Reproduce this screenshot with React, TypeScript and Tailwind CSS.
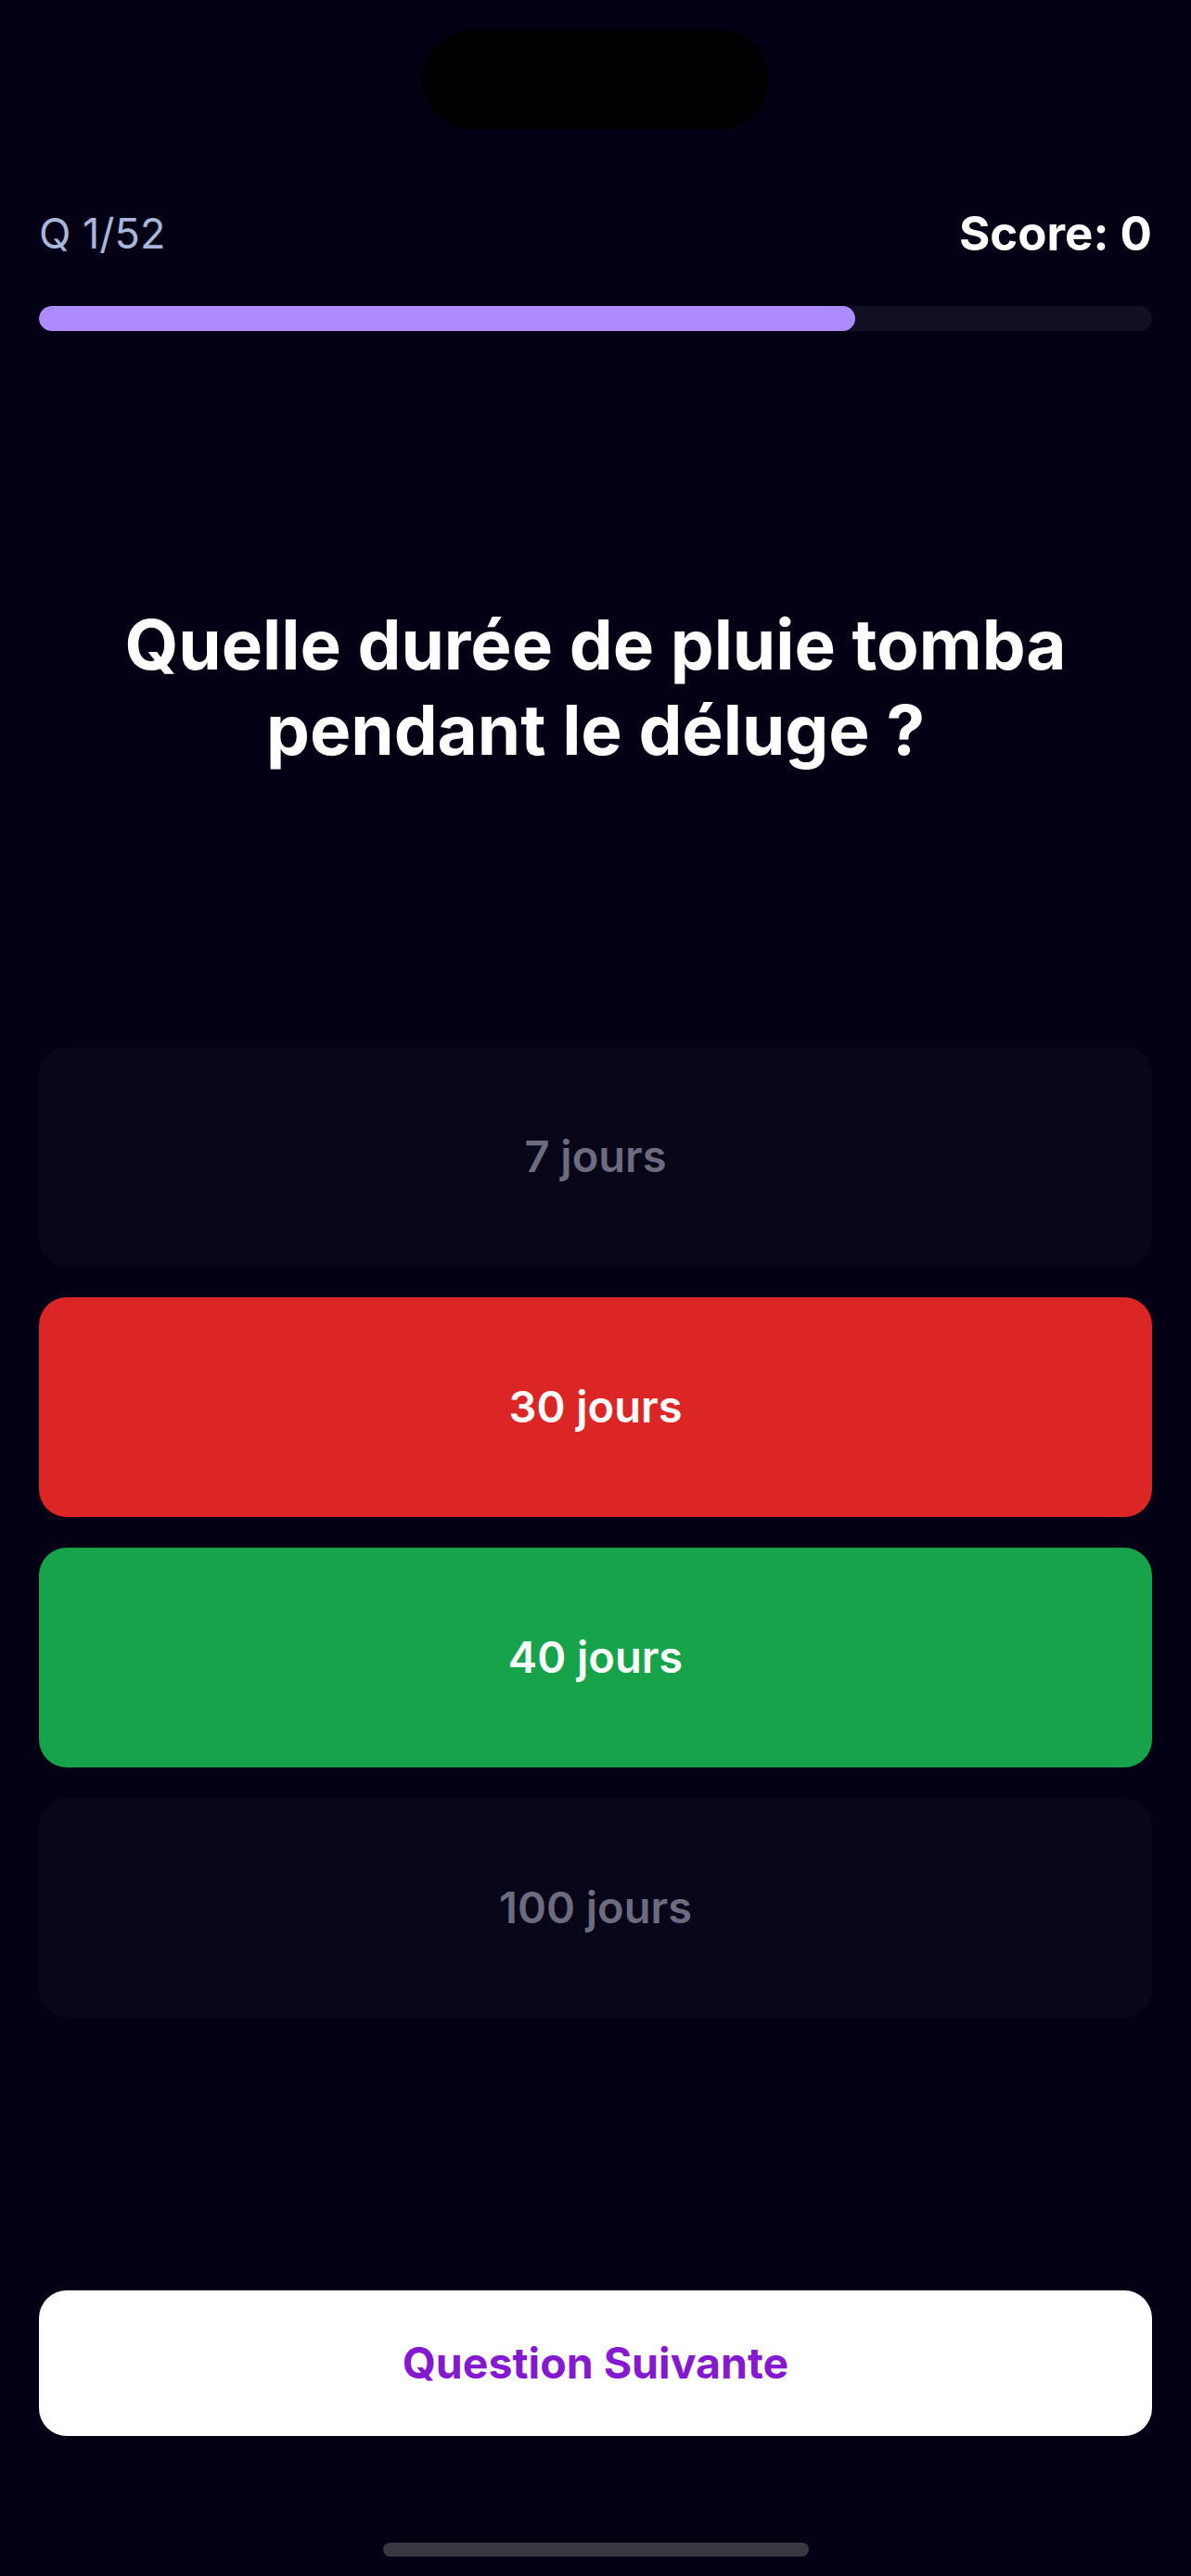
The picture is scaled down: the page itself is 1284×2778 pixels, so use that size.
import React from "react";

const options = [
  { label: "7 jours", state: "dim" },
  { label: "30 jours", state: "wrong" },
  { label: "40 jours", state: "right" },
  { label: "100 jours", state: "dim" },
];

export default function App() {
  return (
    <div
      className="w-[1284px] h-[2778px] bg-[#030016] flex flex-col px-[42px] overflow-hidden"
      style={{ fontFamily: "Inter, 'Noto Sans', sans-serif" }}
    >
      <div className="pt-[32px] flex justify-center">
        <div className="w-[374px] h-[108px] rounded-full bg-black" />
      </div>

      <div className="mt-[85px] flex items-start justify-between h-[54px]">
        <span className="text-[45px] leading-[54px] text-[#aab5da] font-normal">Q 1/52</span>
        <span className="text-[51px] leading-[54px] text-white font-bold">Score: 0</span>
      </div>

      <div className="mt-[51px] h-[27px] w-full rounded-full bg-[#100f24] overflow-hidden">
        <div className="h-full rounded-full bg-[#ad8bfc]" style={{ width: "73.3%" }} />
      </div>

      <h1 className="mt-[292px] text-center text-white font-bold text-[74.5px] leading-[92px]">
        Quelle durée de pluie tomba
        <br />
        pendant le déluge ?
      </h1>

      <div className="mt-[296px] flex flex-col gap-[33px]">
        {options.map((o) => (
          <div
            key={o.label}
            className={
              o.state === "wrong"
                ? "h-[237px] rounded-[30px] bg-[#dc2626] flex items-center justify-center text-white text-[47px] font-semibold"
                : o.state === "right"
                ? "h-[237px] rounded-[30px] bg-[#16a34a] flex items-center justify-center text-white text-[47px] font-semibold"
                : "h-[237px] rounded-[30px] bg-[#080619] flex items-center justify-center text-[#6d6b7f] text-[47px] font-semibold"
            }
          >
            {o.label}
          </div>
        ))}
      </div>

      <div className="mt-[294px] h-[157px] rounded-[30px] bg-white flex items-center justify-center">
        <span className="text-[46.5px] font-bold text-[#8519d0]">Question Suivante</span>
      </div>

      <div className="mt-[115px] flex justify-center">
        <div className="w-[459px] h-[15px] rounded-full bg-[#3a3942]" />
      </div>
    </div>
  );
}
